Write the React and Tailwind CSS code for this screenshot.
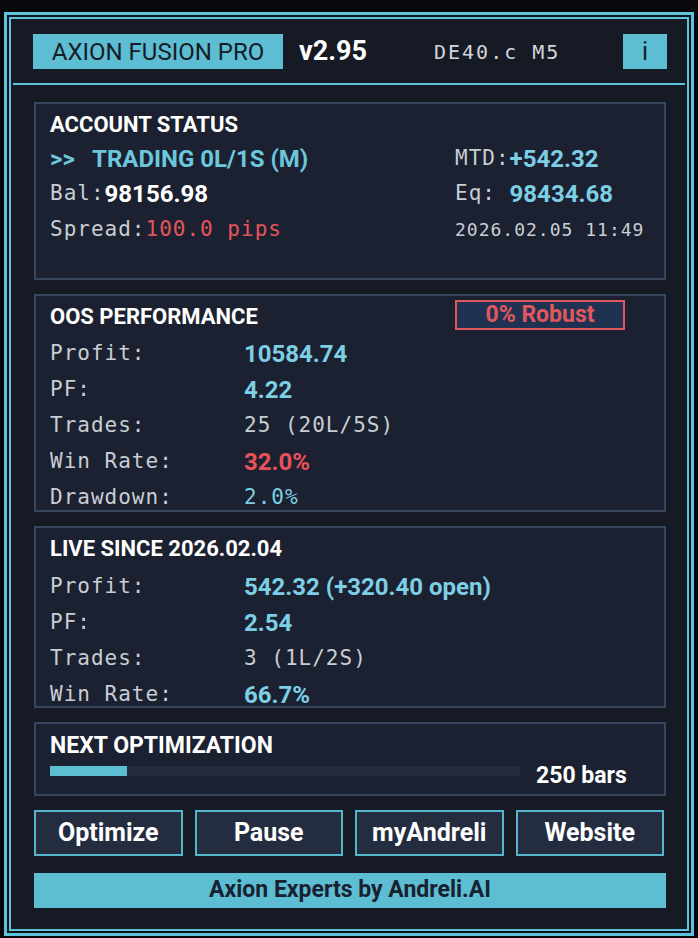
import React from "react";

const MONO = "font-['DejaVu_Sans_Mono',monospace] text-[21px] tracking-[1px] text-[#c9cdd4]";
const SANS = "font-['Roboto',sans-serif]";

function Row({ label, children }) {
  return (
    <div className="flex h-[36px] items-center">
      <div className={`w-[194px] shrink-0 ${MONO}`}>{label}</div>
      <div className="flex items-center">{children}</div>
    </div>
  );
}

function Panel({ className = "", children }) {
  return (
    <div className={`border-2 border-[#37465f] bg-[#1b2130] pl-[14px] ${className}`}>{children}</div>
  );
}

const Title = ({ children }) => (
  <span className={`${SANS} text-[22px] font-bold text-white`}>{children}</span>
);

const CyanVal = ({ children }) => (
  <span className={`${SANS} text-[24px] font-bold text-[#7ccfe5]`}>{children}</span>
);

export default function App() {
  return (
    <div className="h-[938px] w-[698px] overflow-hidden bg-[#06080b] pl-[4px] pt-[12px]">
      <div className="h-[924px] w-[690px] border-[3px] border-[#5ec2da] bg-[#0f131b] p-[2px]">
        <div className="flex h-full flex-col border-2 border-[#5ec2da] bg-[#151a25]">
          {/* Header */}
          <div className="mt-[15px] flex h-[35px] items-center pl-[22px] pr-[20px]">
            <div className={`flex h-[35px] w-[250px] items-center justify-center bg-[#5dbdd2] ${SANS} text-[24px] text-[#161c28]`}>
              AXION FUSION PRO
            </div>
            <div className={`ml-[16px] ${SANS} text-[27px] font-bold text-white`}>v2.95</div>
            <div className="ml-[67px] font-['DejaVu_Sans_Mono',monospace] text-[20px] tracking-[2px] text-[#d3d6dc]">
              DE40.c M5
            </div>
            <div className="flex-1" />
            <div className={`flex h-[35px] w-[44px] items-center justify-center bg-[#5dbdd2] ${SANS} text-[25px] text-[#161c28]`}>
              i
            </div>
          </div>
          <div className="mx-[2px] mt-[14px] h-[2px] bg-[#5ec2da]" />

          <div className="mt-[17px] flex flex-col gap-[14px] pl-[23px] pr-[21px]">
            {/* Account status */}
            <Panel className="h-[178px] pt-[4px]">
              <div className="flex">
                <div className="w-[405px]">
                  <div className="flex h-[33px] items-center">
                    <Title>ACCOUNT STATUS</Title>
                  </div>
                  <div className="flex h-[35px] items-center">
                    <span className={`${SANS} text-[24px] font-bold text-[#6cc7de]`}>
                      &gt;&gt;&nbsp;&nbsp; TRADING 0L/1S (M)
                    </span>
                  </div>
                  <div className="flex h-[36px] items-center">
                    <span className={MONO}>Bal:</span>
                    <span className={`${SANS} text-[24px] font-bold text-white`}>98156.98</span>
                  </div>
                  <div className="flex h-[36px] items-center">
                    <span className={MONO}>Spread:</span>
                    <span className="font-['DejaVu_Sans_Mono',monospace] text-[21px] tracking-[1px] text-[#e5545a]">100.0 pips</span>
                  </div>
                </div>
                <div className="pt-[33px]">
                  <div className="flex h-[35px] items-center">
                    <span className={MONO}>MTD:</span>
                    <CyanVal>+542.32</CyanVal>
                  </div>
                  <div className="flex h-[36px] items-center">
                    <span className={MONO}>Eq:&nbsp;</span>
                    <CyanVal>98434.68</CyanVal>
                  </div>
                  <div className="flex h-[35px] items-center">
                    <span className="font-['DejaVu_Sans_Mono',monospace] text-[18px] tracking-[1px] text-[#c9cdd4]">2026.02.05 11:49</span>
                  </div>
                </div>
              </div>
            </Panel>

            {/* OOS performance */}
            <Panel className="h-[218px] pt-[3px]">
              <div className="flex h-[37px] items-center pb-[3px]">
                <div className="w-[405px]">
                  <Title>OOS PERFORMANCE</Title>
                </div>
                <div className="-mt-[2px] flex h-[30px] w-[170px] items-center justify-center border-2 border-[#e0575e] bg-[#1f3252]">
                  <span className={`${SANS} text-[23px] font-bold text-[#e0575e]`}>0% Robust</span>
                </div>
              </div>
              <Row label="Profit:"><CyanVal>10584.74</CyanVal></Row>
              <Row label="PF:"><CyanVal>4.22</CyanVal></Row>
              <Row label="Trades:"><span className={MONO}>25 (20L/5S)</span></Row>
              <Row label="Win Rate:">
                <span className={`${SANS} text-[24px] font-bold text-[#e8525a]`}>32.0%</span>
              </Row>
              <Row label="Drawdown:">
                <span className="font-['DejaVu_Sans_Mono',monospace] text-[21px] tracking-[1px] text-[#7ccfe5]">2.0%</span>
              </Row>
            </Panel>

            {/* Live since */}
            <Panel className="h-[182px] pt-[3px]">
              <div className="flex h-[38px] items-center pb-[3px]">
                <Title>LIVE SINCE 2026.02.04</Title>
              </div>
              <Row label="Profit:"><CyanVal>542.32 (+320.40 open)</CyanVal></Row>
              <Row label="PF:"><CyanVal>2.54</CyanVal></Row>
              <Row label="Trades:"><span className={MONO}>3 (1L/2S)</span></Row>
              <Row label="Win Rate:"><CyanVal>66.7%</CyanVal></Row>
            </Panel>

            {/* Next optimization */}
            <Panel className="h-[74px] pt-[5px]">
              <div className="flex h-[34px] items-center">
                <span className={`${SANS} text-[23px] font-bold text-white`}>NEXT OPTIMIZATION</span>
              </div>
              <div className="flex h-[26px] items-center">
                <div className="mt-[3px] h-[10px] w-[470px] self-start bg-[#232a39]">
                  <div className="h-full bg-[#5dbdd2]" style={{ width: "16.4%" }} />
                </div>
                <span className={`ml-[16px] ${SANS} text-[23px] font-bold text-white`}>250 bars</span>
              </div>
            </Panel>

            {/* Buttons */}
            <div className="grid h-[46px] grid-cols-4 gap-[12px] pr-[2px]">
              {["Optimize", "Pause", "myAndreli", "Website"].map((t) => (
                <div
                  key={t}
                  className={`flex items-center justify-center border-2 border-[#56b5cb] bg-[#242d3f] ${SANS} text-[25px] font-bold text-white`}
                >
                  {t}
                </div>
              ))}
            </div>
          </div>

          {/* Footer */}
          <div className="mt-[17px] pl-[23px] pr-[21px]">
            <div className={`flex h-[35px] items-center justify-center bg-[#5dbdd2] ${SANS} text-[23px] font-bold text-[#182130]`}>
              Axion Experts by Andreli.AI
            </div>
          </div>
        </div>
      </div>
    </div>
  );
}
